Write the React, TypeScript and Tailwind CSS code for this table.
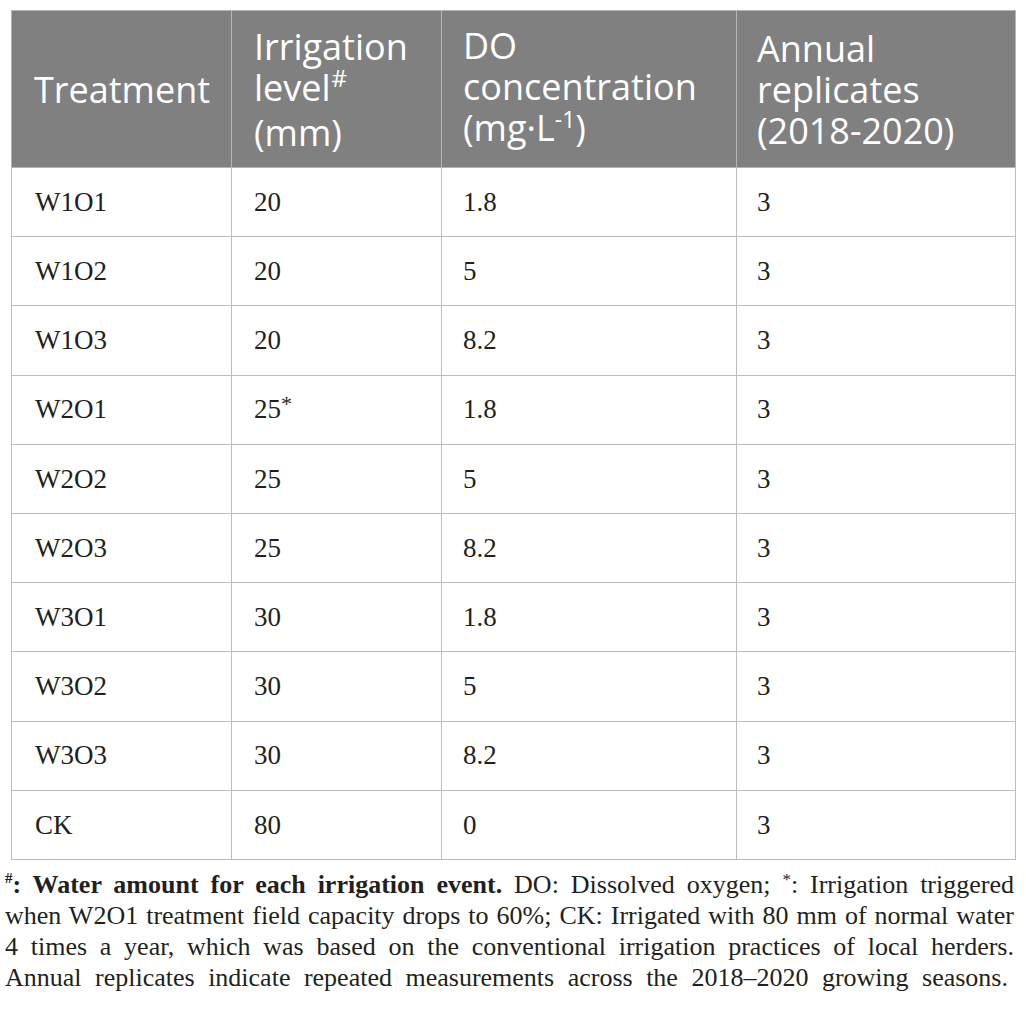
const rows = [
  ["W1O1", "20", "1.8", "3"],
  ["W1O2", "20", "5", "3"],
  ["W1O3", "20", "8.2", "3"],
  ["W2O1", "25*", "1.8", "3"],
  ["W2O2", "25", "5", "3"],
  ["W2O3", "25", "8.2", "3"],
  ["W3O1", "30", "1.8", "3"],
  ["W3O2", "30", "5", "3"],
  ["W3O3", "30", "8.2", "3"],
  ["CK", "80", "0", "3"],
];

const Cell = ({ value }: { value: string }) => {
  if (value.endsWith("*")) {
    return (
      <>
        {value.slice(0, -1)}
        <span className="text-[22px] relative top-[-7px]">*</span>
      </>
    );
  }
  return <>{value}</>;
};

// each footnote line is justified on its own, so the breaks match the print layout
const Line = ({ children, last }: { children: React.ReactNode; last?: boolean }) => (
  <span
    className={
      last
        ? "block h-[31px] w-[1003px] text-justify [text-align-last:justify]"
        : "block h-[31px] text-justify [text-align-last:justify]"
    }
  >
    {children}
  </span>
);

export default function App() {
  return (
    <div className="w-[1026px] h-[1019px] bg-white pt-[10px]">
      <table
        className="ml-[11px] w-[1004px] border-collapse table-fixed"
        style={{ fontFamily: '"Liberation Serif", serif' }}
      >
        <colgroup>
          <col className="w-[220px]" />
          <col className="w-[210px]" />
          <col className="w-[295px]" />
          <col className="w-[279px]" />
        </colgroup>
        <thead>
          <tr
            className="h-[157px] bg-[#808080] text-white text-[36px] leading-[41px]"
            style={{ fontFamily: '"Open Sans", sans-serif' }}
          >
            <th className="border border-[#b5b5b5] text-left font-normal pl-[22px] align-middle">
              Treatment
            </th>
            <th className="border border-[#b5b5b5] text-left font-normal pl-[22px] align-middle">
              Irrigation
              <br />
              level<span className="text-[24px] relative top-[-14px] ml-[1px]">#</span>
              <br />
              (mm)
            </th>
            <th className="border border-[#b5b5b5] text-left font-normal pl-[21px] align-middle">
              DO
              <br />
              concentration
              <br />
              (mg·L<span className="text-[23px] relative top-[-13px]">-1</span>)
            </th>
            <th className="border border-[#b5b5b5] text-left font-normal pl-[20px] align-middle">
              Annual
              <br />
              replicates
              <br />
              (2018-2020)
            </th>
          </tr>
        </thead>
        <tbody className="text-[27px] text-[#231f20]">
          {rows.map((r) => (
            <tr key={r[0]} className="h-[69.2px]">
              <td className="border border-[#bdbdbd] pl-[23px] align-middle">
                <Cell value={r[0]} />
              </td>
              <td className="border border-[#bdbdbd] pl-[22px] align-middle">
                <Cell value={r[1]} />
              </td>
              <td className="border border-[#bdbdbd] pl-[21px] align-middle">
                <Cell value={r[2]} />
              </td>
              <td className="border border-[#bdbdbd] pl-[20px] align-middle">
                <Cell value={r[3]} />
              </td>
            </tr>
          ))}
        </tbody>
      </table>
      <div
        className="mt-[9px] pl-[5px] w-[1014px] text-[26px] leading-[31px] text-[#231f20]"
        style={{ fontFamily: '"Liberation Serif", serif' }}
      >
        <Line>
          <b>
            <span className="text-[15px] leading-none relative top-[-10px]">#</span>: Water
            amount for each irrigation event.
          </b>{" "}
          DO: Dissolved oxygen; <span className="text-[17px] leading-none relative top-[-8px]">*</span>:
          Irrigation triggered
        </Line>
        <Line>
          when W2O1 treatment field capacity drops to 60%; CK: Irrigated with 80 mm of normal water
        </Line>
        <Line>
          4 times a year, which was based on the conventional irrigation practices of local herders.
        </Line>
        <Line last>
          Annual replicates indicate repeated measurements across the 2018–2020 growing seasons.
        </Line>
      </div>
    </div>
  );
}
